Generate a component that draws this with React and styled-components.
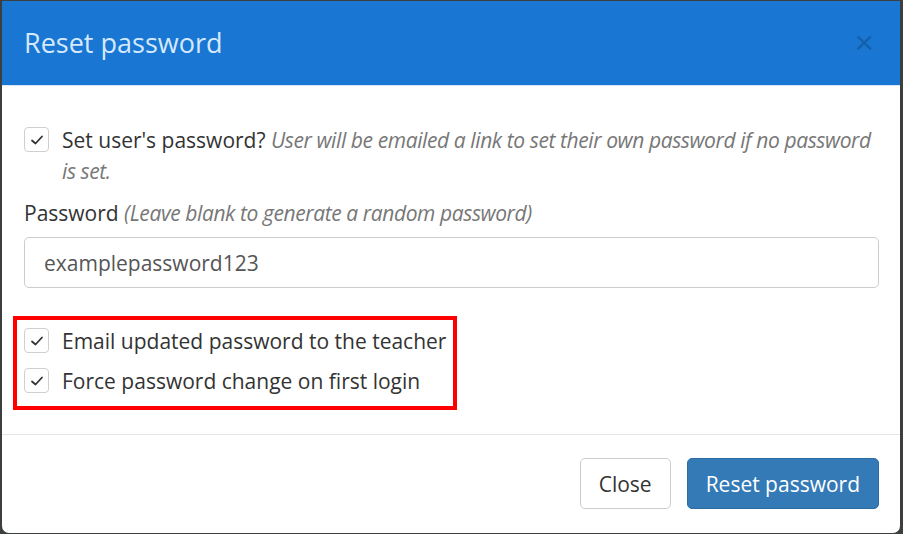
import React, { useState } from 'react'
import styled, { createGlobalStyle } from 'styled-components'

const GlobalStyle = createGlobalStyle`
  html, body {
    margin: 0;
    padding: 0;
    background: #3b3f3d;
  }
  * {
    box-sizing: border-box;
  }
`

function CheckBox({ checked, onChange }) {
  return (
    <Box type='button' onClick={() => onChange(!checked)}>
      {checked && (
        <svg width='14' height='12' viewBox='0 0 14 12'>
          <path d='M2 6.5 L5.5 9.5 L12 2.5' fill='none' stroke='#333' strokeWidth='1.8' strokeLinecap='round' strokeLinejoin='round' />
        </svg>
      )}
    </Box>
  )
}

function App() {
  const [setPw, setSetPw] = useState(true)
  const [password, setPassword] = useState('examplepassword123')
  const [emailIt, setEmailIt] = useState(true)
  const [forceChange, setForceChange] = useState(true)

  return (
    <>
      <GlobalStyle />
      <Modal>
        <Header>
          <Title>Reset password</Title>
          <CloseX type='button'>×</CloseX>
        </Header>
        <Body>
          <CheckRow>
            <CheckBox checked={setPw} onChange={setSetPw} />
            <span>
              Set user's password?{' '}
              <Hint>User will be emailed a link to set their own password if no password is set.</Hint>
            </span>
          </CheckRow>
          <Field>
            <Label>
              Password <Hint>(Leave blank to generate a random password)</Hint>
            </Label>
            <Input
              type='text'
              value={password}
              onChange={(e) => setPassword(e.target.value)}
            />
          </Field>
          <Highlight>
            <CheckRow>
              <CheckBox checked={emailIt} onChange={setEmailIt} />
              <span>Email updated password to the teacher</span>
            </CheckRow>
            <CheckRow>
              <CheckBox checked={forceChange} onChange={setForceChange} />
              <span>Force password change on first login</span>
            </CheckRow>
          </Highlight>
        </Body>
        <Footer>
          <Button>Close</Button>
          <Button primary>Reset password</Button>
        </Footer>
      </Modal>
    </>
  )
}

export default App

const Modal = styled.div`
  margin: 1px 4px 0 2px;
  width: 898px;
  height: 532px;
  background: #fff;
  border-radius: 0 0 7px 7px;
  overflow: hidden;
  display: flex;
  flex-direction: column;
  font-family: 'Open Sans', 'Noto Sans', sans-serif;
  color: #333;
`
const Header = styled.header`
  height: 85px;
  flex: none;
  background: #1976d2;
  border-bottom: 1px solid #d9e8f6;
  display: flex;
  align-items: center;
  justify-content: space-between;
  padding: 0 26px 2px 22px;
`
const Title = styled.h1`
  margin: 0;
  font-size: 27px;
  font-weight: 400;
  color: #d4e9fb;
  line-height: 1;
`
const CloseX = styled.button`
  border: 0;
  background: none;
  padding: 0;
  font-family: 'Liberation Sans', sans-serif;
  font-size: 34px;
  font-weight: 400;
  line-height: 1;
  color: rgba(0, 0, 0, 0.2);
  cursor: pointer;
`
const Body = styled.section`
  padding: 39px 21px 24px 22px;
  display: flex;
  flex-direction: column;
  border-bottom: 1px solid #e5e5e5;
  font-size: 21px;
  line-height: 31px;
`
const CheckRow = styled.label`
  display: flex;
  align-items: flex-start;
  gap: 13px;
  cursor: pointer;
`
const Box = styled.button`
  flex: none;
  width: 25px;
  height: 25px;
  margin-top: 2px;
  padding: 0;
  border: 1px solid #cfcfcf;
  border-radius: 4px;
  background: #fff;
  display: flex;
  align-items: center;
  justify-content: center;
  cursor: pointer;
`
const Hint = styled.em`
  color: #777;
  font-style: italic;
  letter-spacing: -0.4px;
`
const Field = styled.div`
  margin-top: 11px;
  display: flex;
  flex-direction: column;
  gap: 8px;
`
const Label = styled.label``
const Input = styled.input`
  flex: none;
  height: 51px;
  width: 100%;
  border: 1px solid #ccc;
  border-radius: 5px;
  padding: 0 19px;
  font-family: inherit;
  font-size: 21px;
  color: #555;
  outline: none;
`
const Highlight = styled.div`
  align-self: flex-start;
  margin: 28px 0 0 -11px;
  border: 4px solid #ff0000;
  padding: 6px 7px 9px 7px;
  display: flex;
  flex-direction: column;
  gap: 9px;
`
const Footer = styled.footer`
  flex: 1;
  display: flex;
  justify-content: flex-end;
  align-items: flex-start;
  gap: 16px;
  padding: 23px 21px 0 0;
`
const Button = styled.button`
  height: 51px;
  padding: 0 18px;
  border-radius: 5px;
  font-family: inherit;
  font-size: 21px;
  border: 1px solid ${(props) => (props.primary ? '#2e6da4' : '#ccc')};
  background: ${(props) => (props.primary ? '#337ab7' : '#fff')};
  color: ${(props) => (props.primary ? '#fff' : '#333')};
  cursor: pointer;
`
